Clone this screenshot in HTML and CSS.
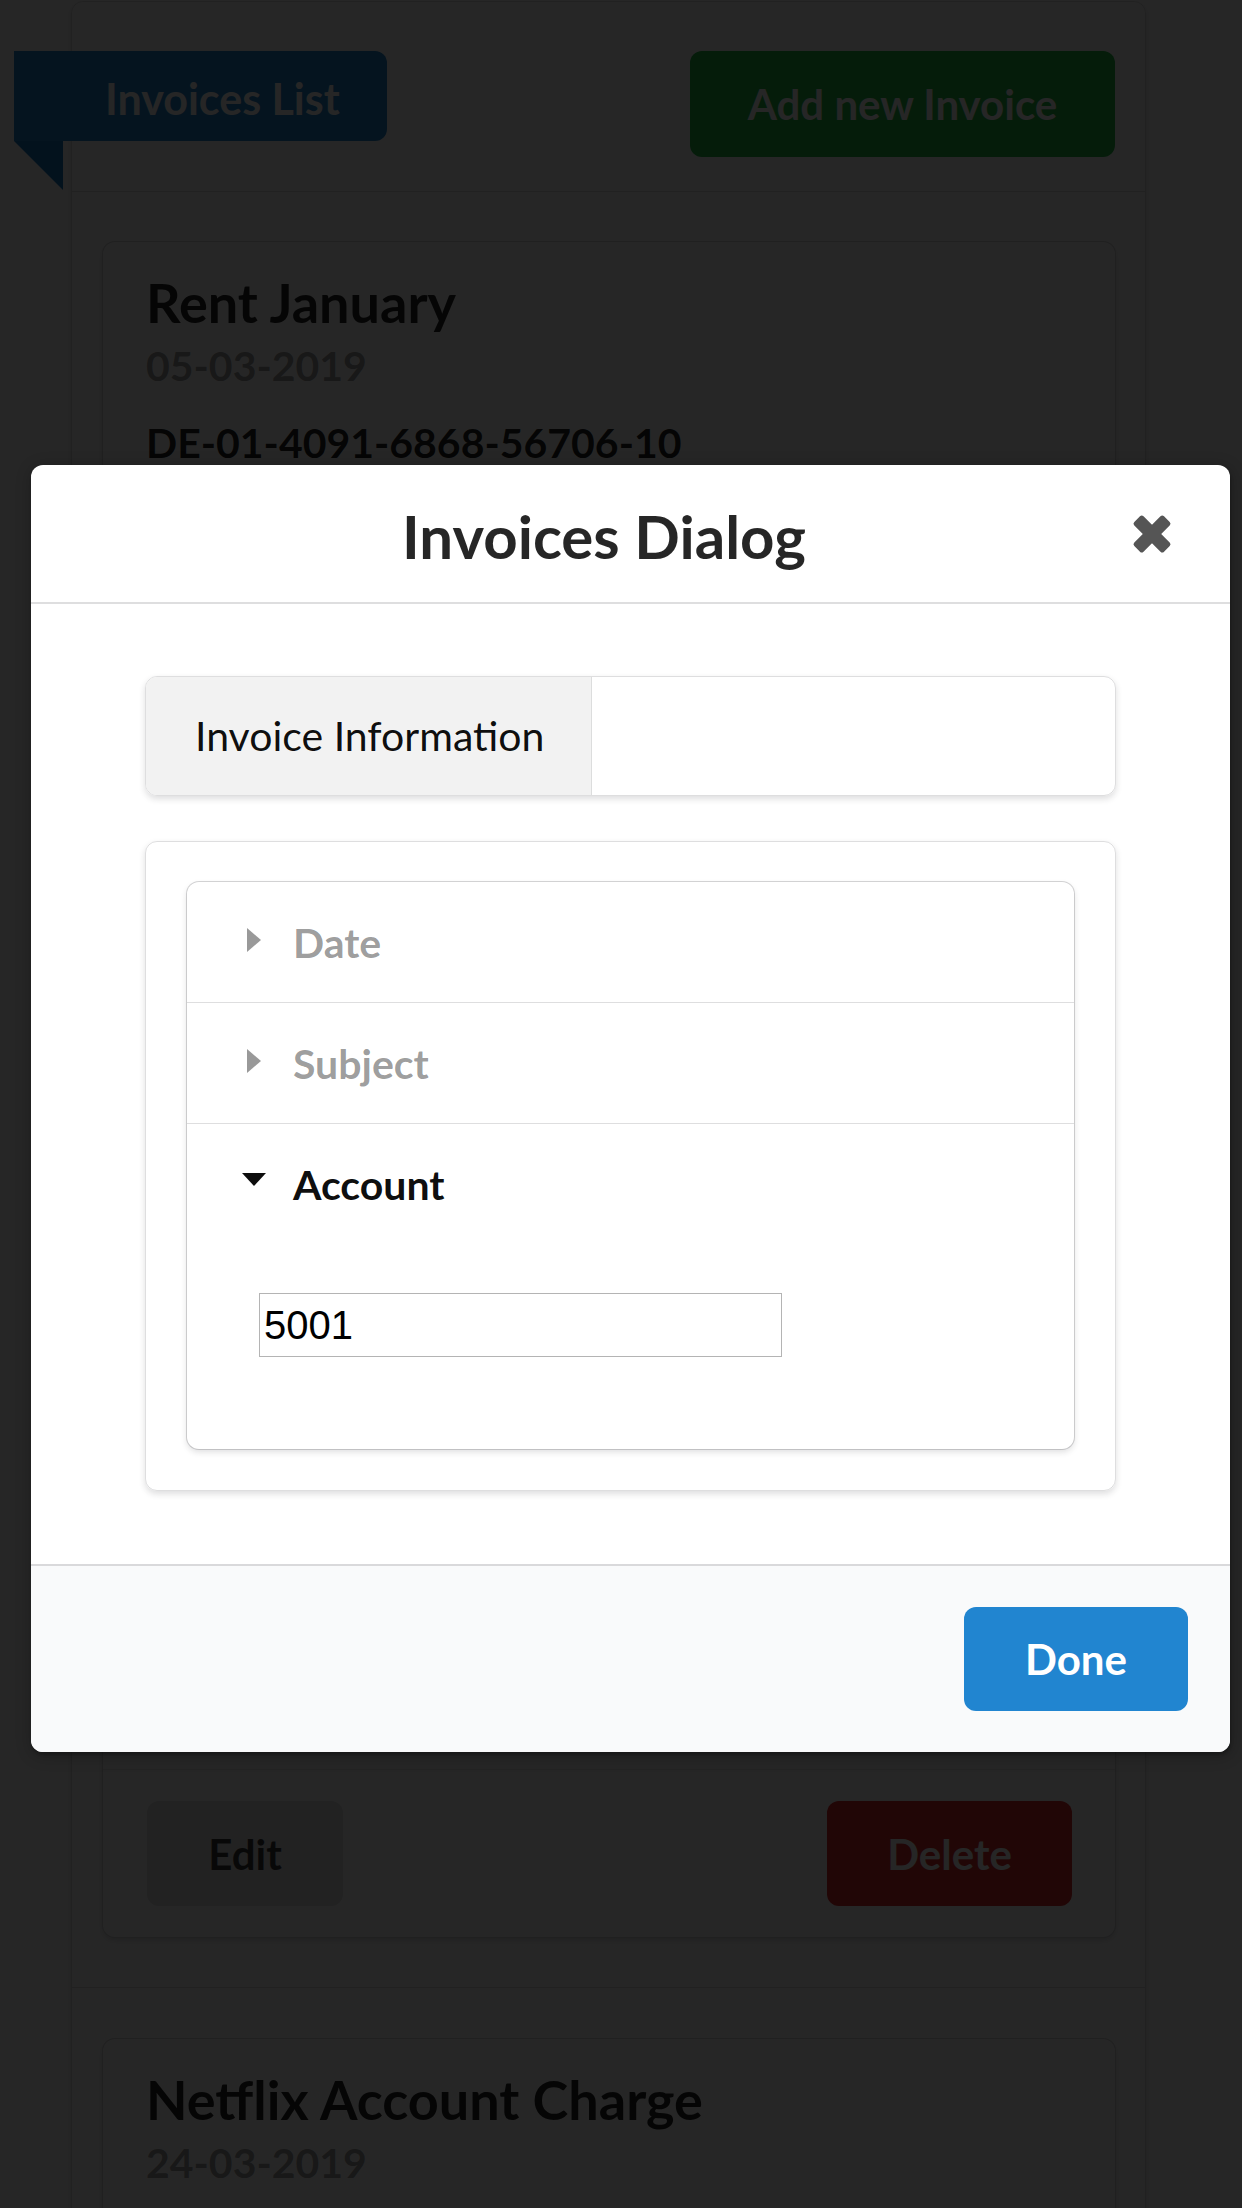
FILE: index.html
```html
<!DOCTYPE html>
<html lang="en">
<head>
<meta charset="utf-8">
<title>Invoices</title>
<link rel="stylesheet" href="styles.css">
</head>
<body>
<div class="page">
  <div class="panel">
    <div class="seg seg-top">
      <div class="ribbon">Invoices List</div>
      <button class="btn btn-green">Add new Invoice</button>
    </div>
    <div class="seg seg-list">
      <div class="card">
        <div class="card-content">
          <div class="card-header">Rent January</div>
          <div class="card-meta">05-03-2019</div>
          <div class="card-desc">DE-01-4091-6868-56706-10</div>
          <div class="card-spacer"></div>
        </div>
        <div class="card-extra">
          <button class="btn btn-grey">Edit</button>
          <button class="btn btn-red">Delete</button>
        </div>
      </div>
    </div>
    <div class="seg seg-list">
      <div class="card">
        <div class="card-content">
          <div class="card-header">Netflix Account Charge</div>
          <div class="card-meta">24-03-2019</div>
        </div>
      </div>
    </div>
  </div>

  <div class="dimmer">
    <div class="modal">
      <div class="modal-header">
        <div class="modal-title">Invoices Dialog</div>
        <svg class="close-icon" viewBox="0 0 40 40" aria-hidden="true">
          <rect x="-1" y="13.5" width="42" height="13" rx="2.5" transform="rotate(45 20 20)"/>
          <rect x="-1" y="13.5" width="42" height="13" rx="2.5" transform="rotate(-45 20 20)"/>
        </svg>
      </div>
      <div class="modal-content">
        <div class="tab-menu">
          <div class="tab-item active">Invoice Information</div>
        </div>
        <div class="tab-segment">
          <div class="accordion">
            <div class="acc-title">
              <svg class="acc-icon" viewBox="0 0 24 24"><polygon points="5,0 19,12 5,24"/></svg>
              <span>Date</span>
            </div>
            <div class="acc-title">
              <svg class="acc-icon" viewBox="0 0 24 24"><polygon points="5,0 19,12 5,24"/></svg>
              <span>Subject</span>
            </div>
            <div class="acc-title active">
              <svg class="acc-icon" viewBox="0 0 24 24"><polygon points="0,3 24,3 12,16"/></svg>
              <span>Account</span>
            </div>
            <div class="acc-content">
              <input class="acc-input" type="text" value="5001">
            </div>
          </div>
        </div>
      </div>
      <div class="modal-actions">
        <button class="btn btn-blue">Done</button>
      </div>
    </div>
  </div>
</div>
</body>
</html>
```
FILE: styles.css
```css
html, body {
  margin: 0;
  padding: 0;
  background: #ffffff;
}

body {
  font-family: Lato, "Noto Sans", sans-serif;
  color: rgba(0, 0, 0, 0.87);
}

.page {
  position: relative;
  height: 2208px;
  overflow: hidden;
  padding-top: 1px;
  box-sizing: border-box;
  background: #ffffff;
}

/* ---------- underlying list page ---------- */

.panel {
  margin-left: 71px;
  width: 1075px;
  box-sizing: border-box;
  border: 1px solid rgba(34, 36, 38, 0.15);
  border-radius: 12px;
  box-shadow: 0 3px 6px 0 rgba(34, 36, 38, 0.15);
}

.seg + .seg {
  border-top: 1px solid rgba(34, 36, 38, 0.15);
}

.seg-top {
  display: flex;
  justify-content: space-between;
  align-items: flex-start;
  padding: 49px 30px 34px 31px;
}

.seg-list {
  padding: 50px 30px 50px 31px;
}

.seg-list + .seg-list {
  padding-top: 51px;
}

.ribbon {
  position: relative;
  margin-left: -89px;
  width: 373px;
  height: 90px;
  box-sizing: border-box;
  padding-left: 91px;
  padding-top: 5px;
  background: #2185d0;
  color: #ffffff;
  font-weight: 700;
  font-size: 43px;
  line-height: 85px;
  border-radius: 0 12px 12px 0;
}

.ribbon::after {
  content: "";
  position: absolute;
  top: 100%;
  left: 0;
  width: 0;
  height: 0;
  border-style: solid;
  border-width: 0 49px 49px 0;
  border-color: transparent #1678c2 transparent transparent;
}

.btn {
  display: inline-flex;
  align-items: center;
  justify-content: center;
  border: 0;
  border-radius: 12px;
  font-family: Lato, "Noto Sans", sans-serif;
  font-weight: 700;
  font-size: 42px;
  line-height: 1;
  color: #ffffff;
  padding: 0;
  margin: 0;
}

.btn-green {
  width: 425px;
  height: 106px;
  background: #21ba45;
}

.btn-grey {
  width: 196px;
  height: 105px;
  background: #e0e1e2;
  color: rgba(0, 0, 0, 0.75);
}

.btn-red {
  width: 245px;
  height: 105px;
  background: #db2828;
}

.btn-blue {
  width: 224px;
  height: 104px;
  background: #2185d0;
}

.card {
  border-radius: 12px;
  background: #ffffff;
  box-shadow: 0 3px 6px 0 #d4d4d5, 0 0 0 1px #d4d4d5;
}

.card-content {
  padding: 42px 42px 42px 43px;
}

.card-header {
  margin-top: -16px;
  font-size: 54px;
  line-height: 70px;
  font-weight: 700;
  color: rgba(0, 0, 0, 0.85);
}

.card-meta {
  margin-top: 4px;
  font-size: 41px;
  line-height: 48px;
  font-weight: 700;
  color: rgba(0, 0, 0, 0.4);
}

.card-desc {
  margin-top: 25px;
  font-size: 41px;
  line-height: 56px;
  font-weight: 700;
  color: rgba(0, 0, 0, 0.87);
}

.card-spacer {
  height: 1256px;
}

.card-extra {
  display: flex;
  justify-content: space-between;
  border-top: 1px solid rgba(34, 36, 38, 0.1);
  padding: 31px 43px 31px 44px;
}

/* ---------- dimmer + modal ---------- */

.dimmer {
  position: absolute;
  inset: 0;
  background: rgba(0, 0, 0, 0.85);
  padding: 465px 0 0 31px;
  box-sizing: border-box;
}

.modal {
  width: 1199px;
  background: #ffffff;
  border-radius: 12px;
  overflow: hidden;
  box-shadow: 1px 3px 3px 0 rgba(0, 0, 0, 0.2), 1px 3px 15px 2px rgba(0, 0, 0, 0.2);
}

.modal-header {
  display: flex;
  align-items: center;
  height: 137px;
  padding: 0 58px 0 45px;
  border-bottom: 2px solid rgba(34, 36, 38, 0.15);
}

.modal-title {
  flex: 1;
  text-align: center;
  font-size: 60px;
  font-weight: 700;
  line-height: 1;
  color: rgba(0, 0, 0, 0.85);
  padding-top: 4px;
}

.close-icon {
  width: 40px;
  height: 40px;
  fill: #555555;
  flex: none;
}

.modal-content {
  padding: 72px 114px 73px;
}

.tab-menu {
  display: flex;
  height: 120px;
  box-sizing: border-box;
  border: 1px solid rgba(34, 36, 38, 0.15);
  border-radius: 12px;
  box-shadow: 0 3px 6px 0 rgba(34, 36, 38, 0.15);
  overflow: hidden;
}

.tab-item {
  display: flex;
  align-items: center;
  padding: 0 47px 2px 49px;
  font-size: 41px;
  color: rgba(0, 0, 0, 0.95);
  border-right: 1px solid rgba(34, 36, 38, 0.1);
}

.tab-item.active {
  background: #f2f2f2;
}

.tab-segment {
  margin-top: 45px;
  border: 1px solid rgba(34, 36, 38, 0.15);
  border-radius: 12px;
  box-shadow: 0 3px 6px 0 rgba(34, 36, 38, 0.15);
  padding: 40px 41px 41px;
}

.accordion {
  border-radius: 12px;
  background: #ffffff;
  box-shadow: 0 3px 6px 0 rgba(34, 36, 38, 0.15), 0 0 0 1px rgba(34, 36, 38, 0.18);
}

.acc-title {
  display: flex;
  align-items: center;
  height: 120px;
  padding-left: 55px;
  font-size: 41px;
  font-weight: 700;
  color: rgba(0, 0, 0, 0.4);
}

.acc-title + .acc-title {
  border-top: 1px solid rgba(34, 36, 38, 0.15);
}

.acc-title.active {
  color: rgba(0, 0, 0, 0.95);
}

.acc-icon {
  width: 24px;
  height: 24px;
  fill: currentColor;
  margin-right: 27px;
  margin-top: -4px;
}

.acc-content {
  padding: 49px 0 92px 72px;
}

.acc-input {
  display: block;
  width: 523px;
  height: 64px;
  box-sizing: border-box;
  margin: 0;
  padding: 0 4px;
  border: 1px solid #b4b4b4;
  border-radius: 0;
  font-family: "Liberation Sans", Arial, sans-serif;
  font-size: 40px;
  color: #000000;
  background: #ffffff;
}

.modal-actions {
  display: flex;
  justify-content: flex-end;
  padding: 41px 42px 41px;
  background: #f9fafb;
  border-top: 2px solid rgba(34, 36, 38, 0.15);
}
```
